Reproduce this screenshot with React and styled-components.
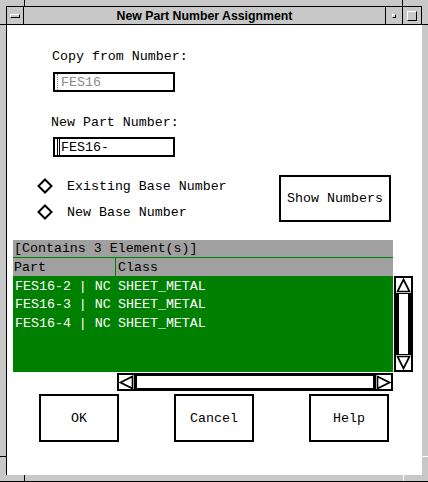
import React from "react";
import styled, { createGlobalStyle } from "styled-components";

const GlobalStyle = createGlobalStyle`
  html, body {
    margin: 0;
    padding: 0;
    background: #c8c8c8;
  }
  * {
    box-sizing: border-box;
  }
`;

const mono = `"Liberation Mono", "DejaVu Sans Mono", monospace`;

const rows = [
  { part: "FES16-2 | NC", cls: "SHEET_METAL" },
  { part: "FES16-3 | NC", cls: "SHEET_METAL" },
  { part: "FES16-4 | NC", cls: "SHEET_METAL" },
];

const App = () => {
  return (
    <>
      <GlobalStyle />
      <Window>
        <Tick $x={24} $y={0} $w={1} $h={6} />
        <Tick $x={402} $y={0} $w={1} $h={6} />
        <Tick $x={0} $y={24} $w={6} $h={1} />
        <Tick $x={422} $y={24} $w={6} $h={1} />
        <Tick $x={0} $y={456} $w={6} $h={1} />
        <Tick $x={422} $y={456} $w={6} $h={1} $light />
        <Tick $x={24} $y={475} $w={1} $h={6} />
        <Tick $x={403} $y={475} $w={1} $h={6} $light />

        <TitleBar>
          <MenuButton>
            <MenuBar />
          </MenuButton>
          <Title>New Part Number Assignment</Title>
          <MinButton>
            <MinBox />
          </MinButton>
          <MaxButton>
            <MaxBox />
          </MaxButton>
        </TitleBar>

        <Content>
          <Label $top={24} $left={45}>Copy from Number:</Label>
          <Field $top={8}>
            <DottedCaret />
            <FieldText $disabled>FES16</FieldText>
          </Field>

          <Label $top={23} $left={44}>New Part Number:</Label>
          <Field $top={7}>
            <Caret />
            <FieldText>FES16-</FieldText>
          </Field>

          <OptionsRow>
            <RadioGroup>
              <RadioItem>
                <Diamond />
                <span>Existing Base Number</span>
              </RadioItem>
              <RadioItem>
                <Diamond />
                <span>New Base Number</span>
              </RadioItem>
            </RadioGroup>
            <ShowButton>Show Numbers</ShowButton>
          </OptionsRow>

          <List>
            <ListTitle>[Contains 3 Element(s)]</ListTitle>
            <ColumnHeader>
              <PartCell $head>Part</PartCell>
              <ClassCell>Class</ClassCell>
            </ColumnHeader>
            <BodyRow>
              <GreenBody>
                {rows.map((r) => (
                  <DataRow key={r.part}>
                    <PartCell>{r.part}</PartCell>
                    <ClassCell>{r.cls}</ClassCell>
                  </DataRow>
                ))}
              </GreenBody>
              <VScroll>
                <VArrow>
                  <Arrow dir="up" />
                </VArrow>
                <VTrough>
                  <Thumb />
                </VTrough>
                <VArrow>
                  <Arrow dir="down" />
                </VArrow>
              </VScroll>
            </BodyRow>
            <HScroll>
              <HArrow>
                <Arrow dir="left" />
              </HArrow>
              <HTrough>
                <Thumb />
              </HTrough>
              <HArrow>
                <Arrow dir="right" />
              </HArrow>
            </HScroll>
          </List>

          <ButtonRow>
            <DialogButton>OK</DialogButton>
            <DialogButton>Cancel</DialogButton>
            <DialogButton>Help</DialogButton>
          </ButtonRow>
        </Content>
      </Window>
    </>
  );
};

const Diamond = () => (
  <svg width="16" height="16" viewBox="0 0 16 16">
    <polygon
      points="8,1.5 14.5,8 8,14.5 1.5,8"
      fill="#fff"
      stroke="#000"
      strokeWidth="2"
    />
  </svg>
);

const arrowPoints = {
  up: "7.5,1.5 13.5,13.5 1.5,13.5",
  down: "1.5,1.5 13.5,1.5 7.5,13.5",
  left: "1.5,7.5 13.5,1.5 13.5,13.5",
  right: "1.5,1.5 13.5,7.5 1.5,13.5",
};

const Arrow = ({ dir }) => (
  <svg width="15" height="15" viewBox="0 0 15 15">
    <polygon
      points={arrowPoints[dir]}
      fill="#fff"
      stroke="#000"
      strokeWidth="1.7"
    />
  </svg>
);

const Window = styled.div`
  position: relative;
  width: 428px;
  height: 482px;
  background: #c8c8c8;
  padding: 6px 6px 6px 6px;
  border-bottom: 1px solid #000;
  display: flex;
  flex-direction: column;
`;

const Tick = styled.span`
  position: absolute;
  left: ${(p) => p.$x}px;
  top: ${(p) => p.$y}px;
  width: ${(p) => p.$w}px;
  height: ${(p) => p.$h}px;
  background: ${(p) => (p.$light ? "#fff" : "#000")};
`;

const TitleBar = styled.div`
  height: 19px;
  flex: 0 0 19px;
  display: flex;
  border: 1px solid #000;
  background: #c8c8c8;
`;

const MenuButton = styled.div`
  width: 17px;
  border-right: 1px solid #000;
  display: flex;
  align-items: center;
  justify-content: center;
`;

const MenuBar = styled.span`
  width: 10px;
  height: 4px;
  border-top: 1px solid #fff;
  border-left: 1px solid #fff;
  border-bottom: 1px solid #000;
  border-right: 1px solid #000;
`;

const Title = styled.div`
  flex: 1;
  display: flex;
  align-items: center;
  justify-content: center;
  font-family: "Liberation Sans", Arial, sans-serif;
  font-weight: bold;
  font-size: 12.3px;
  color: #000;
`;

const MinButton = styled.div`
  width: 17px;
  border-left: 1px solid #000;
  display: flex;
  align-items: center;
  justify-content: center;
`;

const MinBox = styled.span`
  width: 4px;
  height: 4px;
  border-top: 1px solid #fff;
  border-left: 1px solid #fff;
  border-bottom: 1px solid #000;
  border-right: 1px solid #000;
`;

const MaxButton = styled.div`
  width: 19px;
  border-left: 1px solid #000;
  display: flex;
  align-items: center;
  justify-content: center;
`;

const MaxBox = styled.span`
  width: 10px;
  height: 10px;
  border-top: 1px solid #fff;
  border-left: 1px solid #fff;
  border-bottom: 1px solid #000;
  border-right: 1px solid #000;
`;

const Content = styled.div`
  flex: 1;
  background: #fff;
  border-left: 1px solid #000;
  display: flex;
  flex-direction: column;
  font-family: ${mono};
  font-size: 13.3px;
  line-height: 15px;
  color: #000;
`;

const Label = styled.div`
  margin: ${(p) => p.$top}px 0 0 ${(p) => p.$left}px;
  height: 15px;
  white-space: pre;
`;

const Field = styled.div`
  margin: ${(p) => p.$top}px 0 0 46px;
  width: 122px;
  height: 20px;
  border: 2px solid #000;
  display: flex;
  align-items: center;
  padding-left: 2px;
`;

const Caret = styled.span`
  width: 3px;
  height: 16px;
  border-left: 1px solid #000;
  border-right: 1px solid #000;
`;

const DottedCaret = styled.span`
  width: 1px;
  height: 16px;
  border-left: 1px dotted #888;
  margin-right: 2px;
`;

const FieldText = styled.span`
  margin-left: 1px;
  color: ${(p) => (p.$disabled ? "#8a8a8a" : "#000")};
`;

const OptionsRow = styled.div`
  margin-top: 18px;
  padding: 0 31px 0 30px;
  display: flex;
  justify-content: space-between;
  align-items: flex-start;
`;

const RadioGroup = styled.div`
  margin-top: 2px;
  display: flex;
  flex-direction: column;
  gap: 8px;
`;

const RadioItem = styled.div`
  height: 18px;
  display: flex;
  align-items: center;
  gap: 14px;
  white-space: pre;
`;

const ShowButton = styled.div`
  width: 112px;
  height: 47px;
  border: 2px solid #000;
  display: flex;
  align-items: center;
  justify-content: center;
  white-space: pre;
`;

const List = styled.div`
  margin: 18px 0 0 6px;
  width: 400px;
  display: flex;
  flex-direction: column;
`;

const ListTitle = styled.div`
  width: 380px;
  height: 18px;
  background: #a0a0a0;
  border-bottom: 1px solid #008000;
  padding: 1px 0 0 1px;
  white-space: pre;
`;

const ColumnHeader = styled.div`
  width: 380px;
  height: 18px;
  background: #a0a0a0;
  display: flex;
  align-items: center;
`;

const PartCell = styled.div`
  width: 103px;
  height: 100%;
  display: flex;
  align-items: center;
  padding-left: ${(p) => (p.$head ? 1 : 2)}px;
  border-right: ${(p) => (p.$head ? "1px solid #008000" : "none")};
  white-space: pre;
  overflow: hidden;
`;

const ClassCell = styled.div`
  padding-left: 2px;
  white-space: pre;
`;

const BodyRow = styled.div`
  display: flex;
  gap: 1px;
  height: 96px;
`;

const GreenBody = styled.div`
  width: 380px;
  background: #008000;
  color: #fff;
  padding-top: 1px;
`;

const DataRow = styled.div`
  height: 18.5px;
  display: flex;
  align-items: center;
`;

const VScroll = styled.div`
  width: 19px;
  height: 96px;
  border: 2px solid #000;
  display: flex;
  flex-direction: column;
  background: #fff;
`;

const VArrow = styled.div`
  height: 15px;
  display: flex;
  align-items: center;
  justify-content: center;
`;

const VTrough = styled.div`
  flex: 1;
  background: #000;
  padding: 1px 3px;
  display: flex;
`;

const Thumb = styled.div`
  flex: 1;
  background: #fff;
`;

const HScroll = styled.div`
  margin: 1px 0 0 104px;
  width: 276px;
  height: 18px;
  border: 2px solid #000;
  display: flex;
  background: #fff;
`;

const HArrow = styled.div`
  width: 15px;
  display: flex;
  align-items: center;
  justify-content: center;
`;

const HTrough = styled.div`
  flex: 1;
  background: #000;
  padding: 1px 3px;
  display: flex;
`;

const ButtonRow = styled.div`
  margin-top: 3px;
  padding-left: 32px;
  display: flex;
  gap: 55px;
`;

const DialogButton = styled.div`
  width: 80px;
  height: 48px;
  border: 2px solid #000;
  display: flex;
  align-items: center;
  justify-content: center;
`;

export default App;
